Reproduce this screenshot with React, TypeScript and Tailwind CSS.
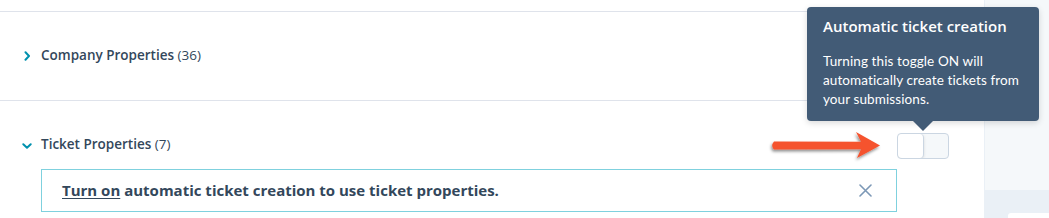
import React from "react";

const ChevronRight = () => (
  <svg width="10" height="10" viewBox="0 0 10 10" fill="none">
    <path d="M3.5 1.3L7 5L3.5 8.7" stroke="#0091ae" strokeWidth="2" strokeLinecap="round" strokeLinejoin="round" />
  </svg>
);

const ChevronDown = () => (
  <svg width="10" height="10" viewBox="0 0 10 10" fill="none">
    <path d="M1.3 3.3L5 6.7L8.7 3.3" stroke="#0091ae" strokeWidth="2" strokeLinecap="round" strokeLinejoin="round" />
  </svg>
);

const CloseIcon = () => (
  <svg width="13" height="13" viewBox="0 0 13 13" fill="none">
    <path d="M1 1L12 12M12 1L1 12" stroke="#7c98b6" strokeWidth="1.6" strokeLinecap="round" />
  </svg>
);

const RedArrow = () => (
  <svg width="120" height="40" viewBox="0 0 120 40" className="absolute left-[768px] top-[128px]">
    <defs>
      <filter id="sh" x="-10%" y="-30%" width="120%" height="160%">
        <feDropShadow dx="-1" dy="2" stdDeviation="1.6" floodColor="#000" floodOpacity="0.45" />
      </filter>
    </defs>
    <path
      d="M6 13.5 L93 13.8 L88 4 L112 17.5 L89 30 L93 21.2 L6 21.5 Q2.5 17.5 6 13.5 Z"
      fill="#f5522d"
      filter="url(#sh)"
    />
  </svg>
);

export default function App() {
  return (
    <div
      className="relative flex h-[218px] w-[1049px] overflow-hidden bg-white text-[#33475b]"
      style={{ fontFamily: "'Open Sans', Lato, sans-serif" }}
    >
      {/* Main column */}
      <div className="w-[984px] shrink-0 bg-white">
        <div className="h-[12px] border-b border-[#dfe3eb]" />

        <div className="flex h-[89px] items-center gap-[9px] border-b border-[#dfe3eb] pl-[22px]">
          <span className="flex w-[10px] justify-center">
            <ChevronRight />
          </span>
          <span className="text-[13.5px] leading-none">
            <span className="font-semibold">Company Properties</span> (36)
          </span>
        </div>

        <div className="pt-[32px] pr-[35px]">
          <div className="flex h-[26px] items-center gap-[9px] pl-[22px]">
            <span className="flex w-[10px] justify-center">
              <ChevronDown />
            </span>
            <span className="-mt-[3px] text-[13.5px] leading-none">
              <span className="font-semibold">Ticket Properties</span> (7)
            </span>
            <div className="ml-auto flex h-[26px] w-[52px] overflow-hidden rounded-[4px] border border-[#cbd6e2] bg-[#f5f8fa]">
              <div className="h-full w-[26px] rounded-[4px] border-r border-[#cbd6e2] bg-white shadow-[0_1px_3px_rgba(0,0,0,0.12)]" />
            </div>
          </div>

          <div className="ml-[41px] mt-[10px] flex h-[43px] w-[856px] items-center justify-between border border-[#7fd1de] pl-[20px] pr-[24px]">
            <span className="text-[15px] font-bold">
              <span className="underline underline-offset-[2px]">Turn on</span> automatic ticket creation to use ticket properties.
            </span>
            <CloseIcon />
          </div>
        </div>
      </div>

      {/* Right panel */}
      <div className="flex flex-1 flex-col border-l border-[#eaf0f6] bg-[#f5f8fa]">
        <div className="h-[190px]" />
        <div className="flex flex-1 justify-end bg-[#eaf0f6] pt-[23px]">
          <div className="w-[41px] rounded-tl-[3px] bg-white" />
        </div>
      </div>

      <RedArrow />

      {/* Tooltip */}
      <div className="absolute left-[807px] top-[7px] h-[114px] w-[232px] rounded-[4px] bg-[#425b76] px-[16px] pt-[8px] text-white shadow-[0_2px_6px_rgba(0,0,0,0.15)]">
        <div className="text-[15px] font-semibold leading-[22px]">Automatic ticket creation</div>
        <div className="mt-[15px] whitespace-nowrap text-[13.5px] leading-[19px] tracking-[0.1px]" style={{ fontFamily: "Lato, 'Open Sans', sans-serif" }}>
          Turning this toggle ON will
          <br />
          automatically create tickets from
          <br />
          your submissions.
        </div>
        <div className="absolute left-[106px] top-full h-0 w-0 border-x-[10px] border-t-[10px] border-x-transparent border-t-[#425b76]" />
      </div>
    </div>
  );
}
